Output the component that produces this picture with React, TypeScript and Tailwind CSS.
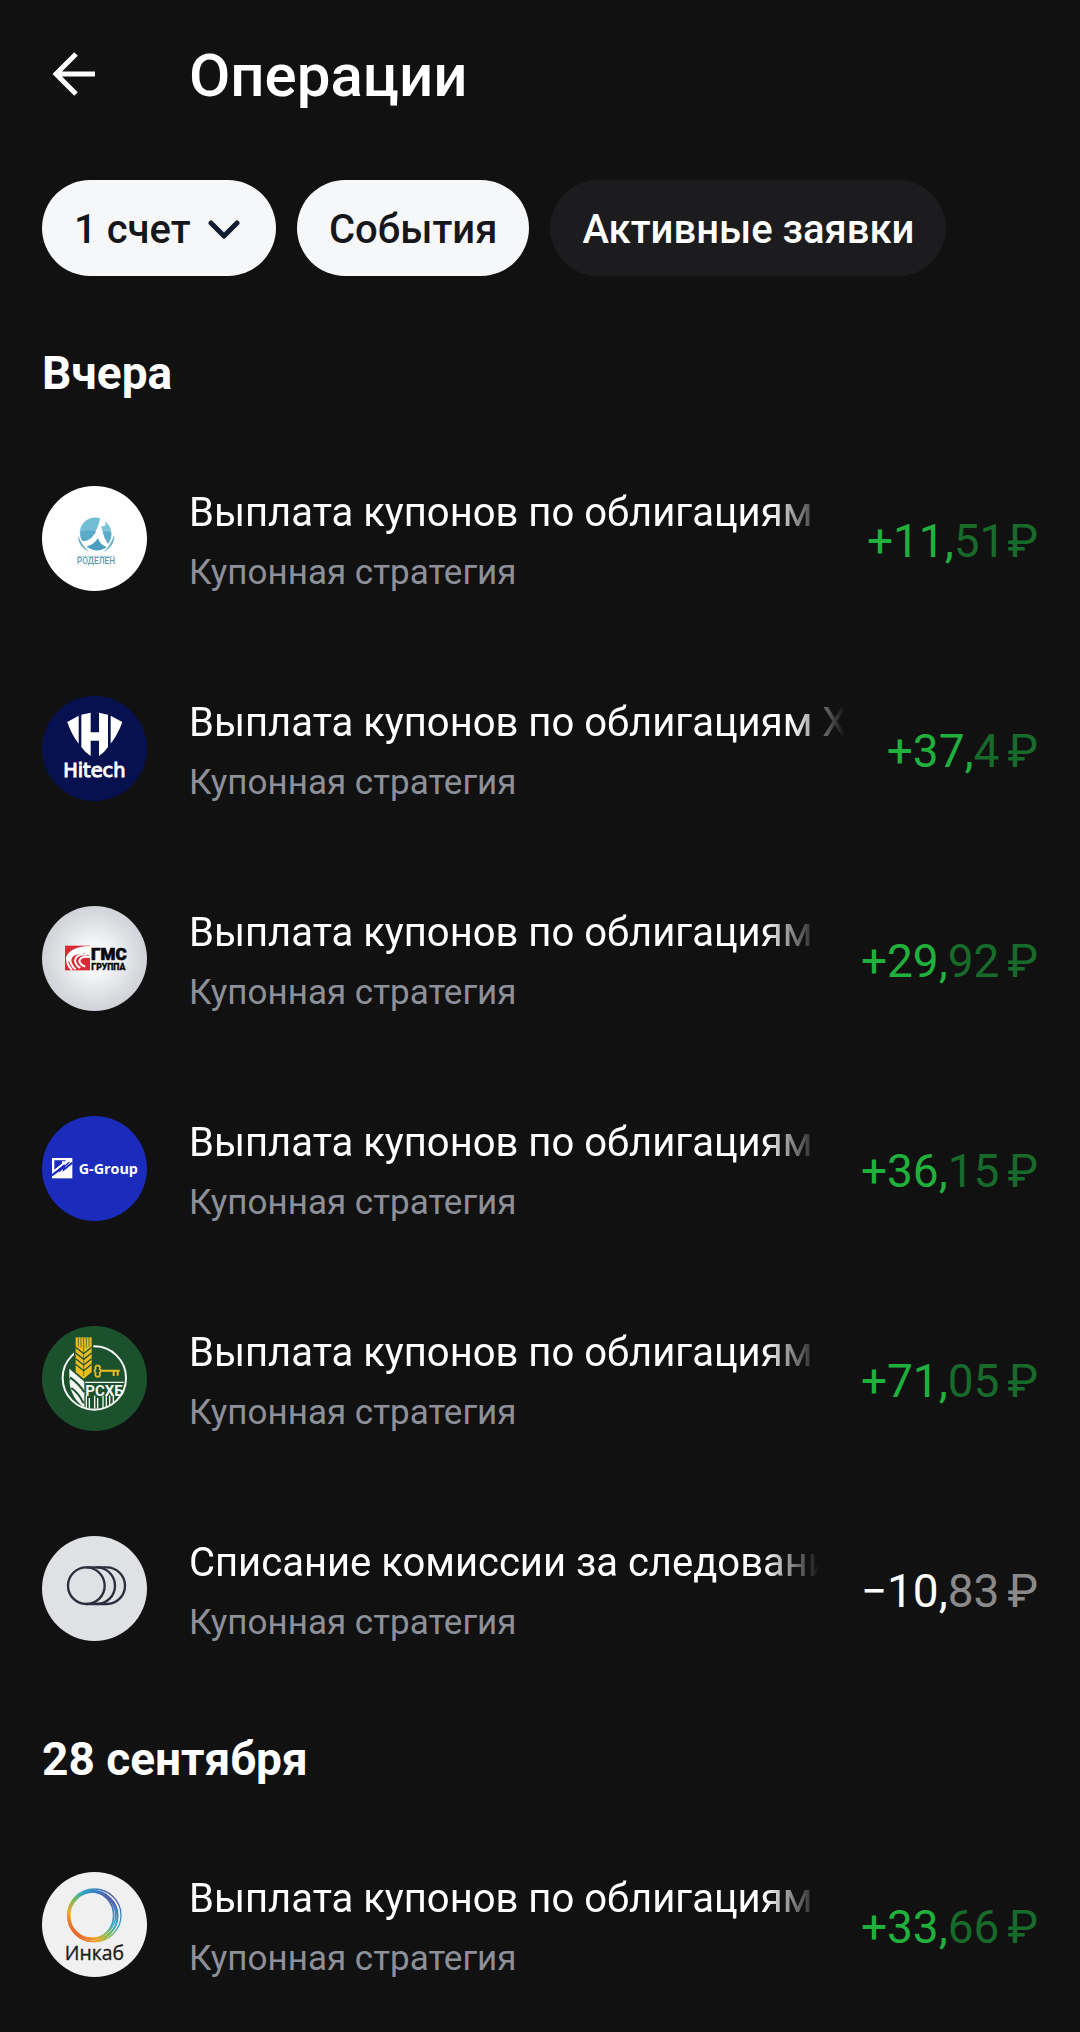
import type { ReactNode } from "react";
import { clsx } from "clsx";

interface Operation {
  title: string;
  account: string;
  whole: string;
  fraction: string;
  income: boolean;
  tight?: boolean;
  logo: ReactNode;
}

interface Section {
  heading: string;
  operations: Operation[];
}

const RodelenLogo = () => (
  <svg viewBox="36 48 315 315" className="size-full">
    <rect x="36" y="48" width="315" height="315" fill="#fff" />
    <path d="M155 211A46 46 0 0 1 210 145Q207 174 184 203Q168 217 155 211Z" fill="#74bdd6" />
    <path d="M152 186Q175 178 199 185L184 203Q168 217 155 211Z" fill="#5aaac8" />
    <path d="M225 154A46 46 0 0 1 234 221Q222 200 213 168Q219 171 227 165Z" fill="#7cc2d8" />
    <path d="M218 185Q230 181 243 187A46 46 0 0 1 234 221Q222 204 218 185Z" fill="#5aaac8" />
    <path d="M170 229Q190 225 204 205Q210 224 230 231A46 46 0 0 1 170 229Z" fill="#4d9fbd" />
    <path d="M144 196A52 52 0 0 0 178 246Q157 230 144 196ZM253 194A52 52 0 0 1 219 246Q241 229 253 194Z" fill="#65abc5" />
    <path d="M144 259H253" stroke="#8ab4c4" strokeWidth="3" strokeDasharray="5 2" />
    <text x="198" y="282" textAnchor="middle" fontFamily="Roboto, sans-serif" fontSize="25" fontWeight="500" fill="#5f9bb3">
      РОДЕЛЕН
    </text>
  </svg>
);

const HitechLogo = () => (
  <svg viewBox="36 48 315 315" className="size-full">
    <rect x="36" y="48" width="315" height="315" fill="#07114f" />
    <g fill="#fff">
      <path d="M112 126L146 107V191Q124 163 112 126Z" />
      <path d="M154 104L182 98V157H207V98L234 104V201Q222 219 207 228V182H182V228Q166 218 154 201Z" />
      <path d="M242 107L277 126Q264 163 242 191Z" />
    </g>
    <text x="193" y="290" textAnchor="middle" fontFamily="DejaVu Sans, sans-serif" fontSize="58" fill="#fff" stroke="#fff" strokeWidth="3">
      Hitech
    </text>
  </svg>
);

const GmsLogo = () => (
  <svg viewBox="36 48 315 315" className="size-full">
    <defs>
      <radialGradient id="gms-bg">
        <stop offset="30%" stopColor="#f4f6f8" />
        <stop offset="100%" stopColor="#cfd2d6" />
      </radialGradient>
    </defs>
    <rect x="36" y="48" width="315" height="315" fill="url(#gms-bg)" />
    <rect x="105" y="167" width="75" height="74" fill="#dc2a35" />
    <path d="M108 203Q121 168 181 168V200Q166 186 146 189Q121 193 120 215Q110 214 108 203Z" fill="#fff" />
    <g fill="none" stroke="#fff" strokeWidth="6">
      <path d="M160 188Q123 188 121 209Q121 225 137 238" />
      <path d="M172 194Q138 190 135 211Q136 225 151 234" />
      <path d="M180 201Q151 197 148 213Q150 224 166 230" />
      <path d="M112 200Q107 221 126 240" />
    </g>
    <g fontFamily="Roboto, sans-serif" fontWeight="900" fill="#0a0a0a" stroke="#0a0a0a">
      <text x="183" y="210" fontSize="51" strokeWidth="2">
        ГМС
      </text>
      <text x="184" y="241" fontSize="26" strokeWidth="1">
        ГРУППА
      </text>
    </g>
  </svg>
);

const GGroupLogo = () => (
  <svg viewBox="36 48 315 315" className="size-full">
    <rect x="36" y="48" width="315" height="315" fill="#1b2bbb" />
    <rect x="66" y="174" width="61" height="61" fill="#fff" />
    <g fill="none" stroke="#1b2bbb">
      <path d="M73 210V181H108Z" fill="#1b2bbb" stroke="none" />
      <path d="M66 226L101 199V209L127 188" strokeWidth="6" />
      <path d="M73 213L99 193V184" stroke="#fff" strokeWidth="6" />
      <path d="M74 219L103 195M87 215L118 186" strokeWidth="4" />
    </g>
    <text x="146" y="222" fontFamily="Open Sans, sans-serif" fontSize="43" fontWeight="bold" fill="#fff">
      G-Group
    </text>
  </svg>
);

const RshbLogo = () => (
  <svg viewBox="36 48 315 315" className="size-full">
    <rect x="36" y="48" width="315" height="315" fill="#1c512d" />
    <circle cx="193" cy="204" r="95" fill="none" stroke="#f4f7f2" strokeWidth="6" />
    <path d="M132 78H190V190L161 212L132 190Z" fill="#1c512d" />
    <path d="M137 82H185V186L161 206L137 186Z" fill="#eebb22" />
    <g fill="none" stroke="#1c512d">
      <path d="M145 80V110M153 80V113M169 80V113M177 80V110M161 80V198" strokeWidth="2" />
      <path d="M137 112L161 131L185 112M137 129L161 148L185 129M137 146L161 165L185 146M137 163L161 182L185 163" strokeWidth="4" />
    </g>
    <g fill="none" stroke="#eebb22" strokeWidth="6">
      <path d="M199 167H207Q212 170 209 177Q217 182 209 188Q212 197 207 200H199Q194 196 197 188Q190 182 197 177Q194 170 199 167Z" strokeWidth="5" />
      <path d="M214 182H269M251 184V198M263 184V197" />
    </g>
    <path d="M118 176L163 215V247Q126 234 118 204Z" fill="#f4f7f2" />
    <path d="M118 210Q151 228 163 247V293Q121 264 118 210Z" fill="#f4f7f2" />
    <path d="M120 202Q148 222 163 247M124 234Q145 248 161 280" fill="none" stroke="#1c512d" strokeWidth="6" />
    <text x="166" y="257" fontFamily="Roboto, sans-serif" fontSize="45" fontWeight="700" fill="#f4f7f2">
      РСХБ
    </text>
    {/* Stems running down from the lettering to the ring */}
    <path d="M169 257V294M178 264V296M194 257V296M203 264V296M219 257V294M229 257V291M239 257V286M250 257V278" stroke="#f4f7f2" strokeWidth="4" />
    <path d="M166 217H281" stroke="#f4f7f2" strokeWidth="4" />
  </svg>
);

const CoinsLogo = () => (
  <svg viewBox="36 48 315 315" className="size-full">
    <rect x="36" y="48" width="315" height="315" fill="#dfe1e4" />
    <g fill="none" stroke="#2b2e3b" strokeWidth="7">
      <circle cx="169" cy="197" r="55" />
      <path d="M169 142H200A55 55 0 0 1 200 252H169" />
      <path d="M200 142H230A55 55 0 0 1 230 252H200" />
    </g>
  </svg>
);

const InkabLogo = () => (
  <svg viewBox="36 36 315 315" className="size-full">
    <defs>
      <linearGradient id="inkab-ring" x1="0" y1="1" x2="1" y2="0">
        <stop offset="10%" stopColor="#e2552c" />
        <stop offset="28%" stopColor="#f3a62b" />
        <stop offset="46%" stopColor="#7dbb50" />
        <stop offset="62%" stopColor="#35a9c4" />
        <stop offset="80%" stopColor="#3a7cc0" />
        <stop offset="92%" stopColor="#6b3f92" />
      </linearGradient>
    </defs>
    <rect x="36" y="36" width="315" height="315" fill="#f0f0f1" />
    <g fill="none" stroke="url(#inkab-ring)">
      <ellipse cx="193" cy="166" rx="80" ry="79" strokeWidth="4" />
      <ellipse cx="188" cy="168" rx="74" ry="76" strokeWidth="5" />
      <ellipse cx="184" cy="166" rx="67" ry="71" strokeWidth="5" />
      <ellipse cx="191" cy="167" rx="72" ry="71" strokeWidth="5" />
      <ellipse cx="186" cy="165" rx="71" ry="69" strokeWidth="4" />
    </g>
    <text x="193" y="301" textAnchor="middle" fontFamily="Open Sans, sans-serif" fontSize="58" fontWeight="500" fill="#1a1a1a" stroke="#1a1a1a" strokeWidth="1">
      Инкаб
    </text>
  </svg>
);

const COUPON = "Выплата купонов по облигациям";
const ACCOUNT = "Купонная стратегия";

const sections: Section[] = [
  {
    heading: "Вчера",
    operations: [
      { title: COUPON, account: ACCOUNT, whole: "+11", fraction: "51", income: true, tight: true, logo: <RodelenLogo /> },
      { title: `${COUPON} Х`, account: ACCOUNT, whole: "+37", fraction: "4", income: true, logo: <HitechLogo /> },
      { title: COUPON, account: ACCOUNT, whole: "+29", fraction: "92", income: true, logo: <GmsLogo /> },
      { title: COUPON, account: ACCOUNT, whole: "+36", fraction: "15", income: true, logo: <GGroupLogo /> },
      { title: COUPON, account: ACCOUNT, whole: "+71", fraction: "05", income: true, logo: <RshbLogo /> },
      { title: "Списание комиссии за следование", account: ACCOUNT, whole: "−10", fraction: "83", income: false, logo: <CoinsLogo /> },
    ],
  },
  {
    heading: "28 сентября",
    operations: [
      { title: COUPON, account: ACCOUNT, whole: "+33", fraction: "66", income: true, logo: <InkabLogo /> },
    ],
  },
];

const OperationRow = ({ operation }: { operation: Operation }) => {
  const { title, account, whole, fraction, income, tight, logo } = operation;

  return (
    <li className="flex h-[210px] items-center pt-1.5">
      <div className="mb-1.5 size-[105px] shrink-0 overflow-hidden rounded-full">{logo}</div>

      <div className="ml-[42px] min-w-0 flex-1 pt-1">
        {/* Long titles fade out before the amount */}
        <p className="overflow-hidden whitespace-nowrap text-[40px] leading-[60px] text-white [mask-image:linear-gradient(to_right,black_calc(100%-54px),transparent)]">
          {title}
        </p>
        <p className="truncate text-[35px] leading-[60px] text-[#8e9099]">{account}</p>
      </div>

      <p className={clsx("ml-[42px] shrink-0 whitespace-nowrap text-[46px] leading-[60px]", income ? "text-[#20b03c]" : "text-white")}>
        {whole},
        <span className={income ? "text-[#176a2a]" : "text-[#8a8a8a]"}>
          {fraction}
          <span className={tight ? "ml-0.5" : "ml-2"}>₽</span>
        </span>
      </p>
    </li>
  );
};

const App = () => {
  return (
    <main className="min-h-screen bg-[#111111] px-[42px] font-['Roboto',sans-serif] text-white">
      <header className="flex h-[180px] items-start gap-[84px] pt-[38px]">
        <button type="button" aria-label="Назад" className="ml-2 flex h-[72px] w-[55px] items-center">
          <svg viewBox="0 0 48 48" className="size-12" fill="none" stroke="currentColor" strokeWidth="5">
            <path d="M45 24H7M26 4L6 24L26 44" />
          </svg>
        </button>
        <h1 className="text-[60px] leading-[76px] font-medium">Операции</h1>
      </header>

      <div className="flex gap-[21px] text-[40px] font-medium">
        <div className="relative">
          <select aria-label="Счет" className="h-24 appearance-none rounded-full bg-[#f6f7f9] pt-1 pr-[85px] pl-8 text-[#16171a]">
            <option>1 счет</option>
          </select>
          <svg viewBox="0 0 32 20" className="pointer-events-none absolute top-10 right-9 h-5 w-8" fill="none" stroke="#141c30" strokeWidth="5" strokeLinecap="round" strokeLinejoin="round">
            <path d="M3 3L16 16L29 3" />
          </svg>
        </div>
        <button type="button" className="h-24 rounded-full bg-[#f6f7f9] px-8 pt-1 text-[#16171a]">
          События
        </button>
        <button type="button" className="h-24 rounded-full bg-[#1c1c1e] px-8 pt-1 text-white">
          Активные заявки
        </button>
      </div>

      <div className="pt-[31px]">
        {sections.map((section) => (
          <section key={section.heading}>
            <h2 className="h-[126px] pt-9 text-[46px] leading-[60px] font-bold">{section.heading}</h2>
            <ul>
              {section.operations.map((operation) => (
                <OperationRow key={operation.whole} operation={operation} />
              ))}
            </ul>
          </section>
        ))}
      </div>
    </main>
  );
};

export default App;
